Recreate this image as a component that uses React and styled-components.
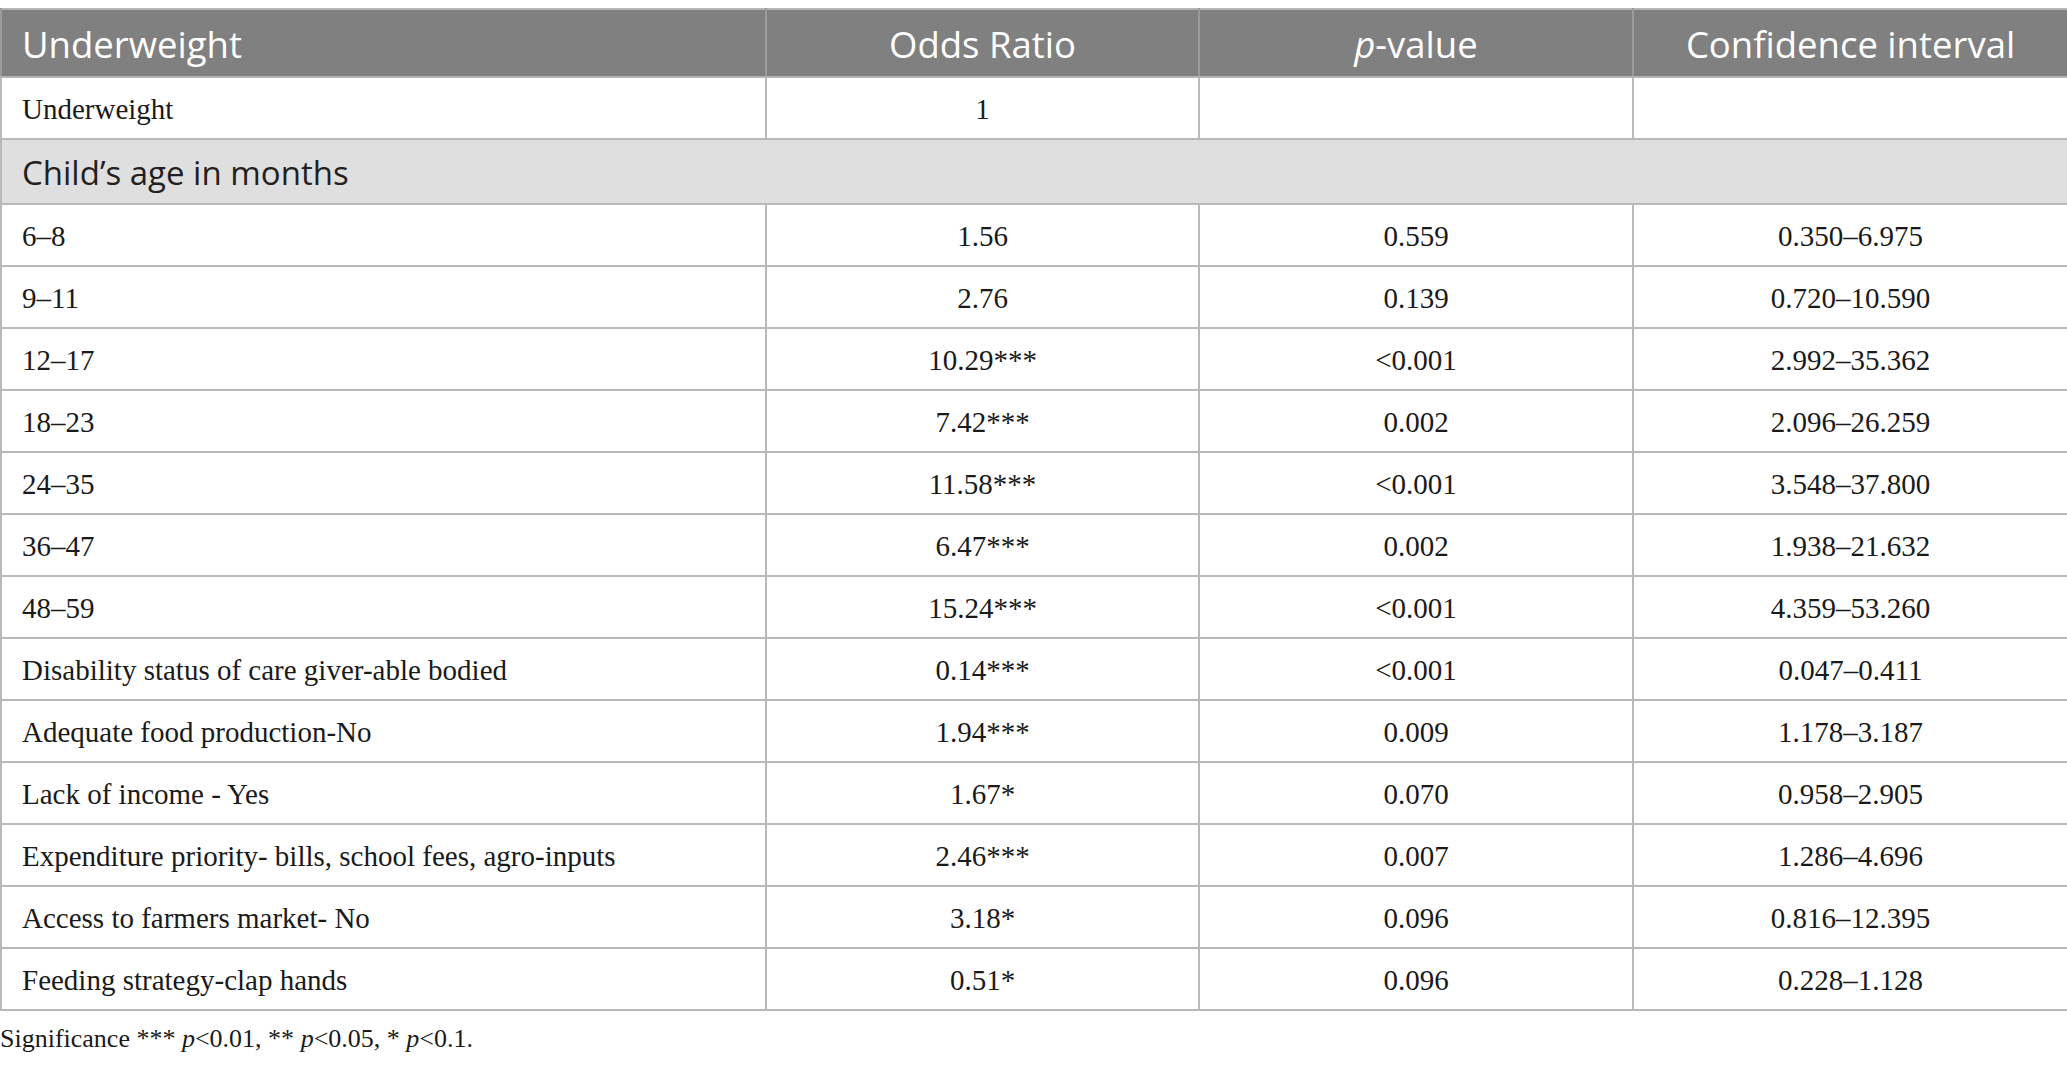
import React from 'react';
import styled, { createGlobalStyle } from 'styled-components';

const GlobalStyle = createGlobalStyle`
  html, body {
    margin: 0;
    padding: 0;
    background: #ffffff;
  }
  body {
    padding-top: 8px;
    font-family: "Liberation Serif", "Times New Roman", serif;
    color: #1a1a1a;
  }
`;

const Table = styled.table`
  width: 2067px;
  table-layout: fixed;
  border-collapse: collapse;
  border: 2px solid #b4b4b4;
`;

const HeadRow = styled.tr`
  height: 68px;
  background-color: #7f807f;
`;

const HeadCell = styled.th`
  font-family: "Open Sans", "Liberation Sans", sans-serif;
  font-weight: 400;
  font-size: 36.5px;
  color: #ffffff;
  text-align: ${(props) => (props.left ? 'left' : 'center')};
  padding: 2px 0 0 ${(props) => (props.left ? '20px' : '0')};
  border-left: 2px solid #9b9b9b;
  border-bottom: 2px solid #b4b4b4;
  white-space: nowrap;
`;

const Italic = styled.span`
  font-style: italic;
`;

const Row = styled.tr`
  height: 62px;
  background-color: #ffffff;
`;

const Cell = styled.td`
  font-size: 29px;
  text-align: ${(props) => (props.left ? 'left' : 'center')};
  padding: 3px 0 0 ${(props) => (props.left ? '20px' : '0')};
  border: 2px solid #b9b9b9;
  white-space: nowrap;
`;

const SectionRow = styled.tr`
  height: 65px;
  background-color: #e0dfe0;
`;

const SectionCell = styled.td`
  font-family: "Open Sans", "Liberation Sans", sans-serif;
  font-size: 33px;
  color: #231f20;
  padding: 2px 0 0 20px;
  border: 2px solid #b9b9b9;
`;

const Footnote = styled.p`
  margin: 13px 0 0 0;
  font-size: 26px;
  line-height: 30px;
`;

const rows = [
  ['6–8', '1.56', '0.559', '0.350–6.975'],
  ['9–11', '2.76', '0.139', '0.720–10.590'],
  ['12–17', '10.29***', '<0.001', '2.992–35.362'],
  ['18–23', '7.42***', '0.002', '2.096–26.259'],
  ['24–35', '11.58***', '<0.001', '3.548–37.800'],
  ['36–47', '6.47***', '0.002', '1.938–21.632'],
  ['48–59', '15.24***', '<0.001', '4.359–53.260'],
  ['Disability status of care giver-able bodied', '0.14***', '<0.001', '0.047–0.411'],
  ['Adequate food production-No', '1.94***', '0.009', '1.178–3.187'],
  ['Lack of income - Yes', '1.67*', '0.070', '0.958–2.905'],
  ['Expenditure priority- bills, school fees, agro-inputs', '2.46***', '0.007', '1.286–4.696'],
  ['Access to farmers market- No', '3.18*', '0.096', '0.816–12.395'],
  ['Feeding strategy-clap hands', '0.51*', '0.096', '0.228–1.128'],
];

const App = () => (
  <>
    <GlobalStyle />
    <Table>
      <colgroup>
        <col style={{ width: 765 }} />
        <col style={{ width: 433 }} />
        <col style={{ width: 434 }} />
        <col style={{ width: 435 }} />
      </colgroup>
      <thead>
        <HeadRow>
          <HeadCell left>Underweight</HeadCell>
          <HeadCell>Odds Ratio</HeadCell>
          <HeadCell><Italic>p</Italic>-value</HeadCell>
          <HeadCell>Confidence interval</HeadCell>
        </HeadRow>
      </thead>
      <tbody>
        <Row>
          <Cell left>Underweight</Cell>
          <Cell>1</Cell>
          <Cell />
          <Cell />
        </Row>
        <SectionRow>
          <SectionCell colSpan={4}>Child’s age in months</SectionCell>
        </SectionRow>
        {rows.map(([label, odds, p, ci]) => (
          <Row key={label}>
            <Cell left>{label}</Cell>
            <Cell>{odds}</Cell>
            <Cell>{p}</Cell>
            <Cell>{ci}</Cell>
          </Row>
        ))}
      </tbody>
    </Table>
    <Footnote>
      Significance *** <Italic>p</Italic>&lt;0.01, ** <Italic>p</Italic>&lt;0.05, * <Italic>p</Italic>&lt;0.1.
    </Footnote>
  </>
);

export default App;
